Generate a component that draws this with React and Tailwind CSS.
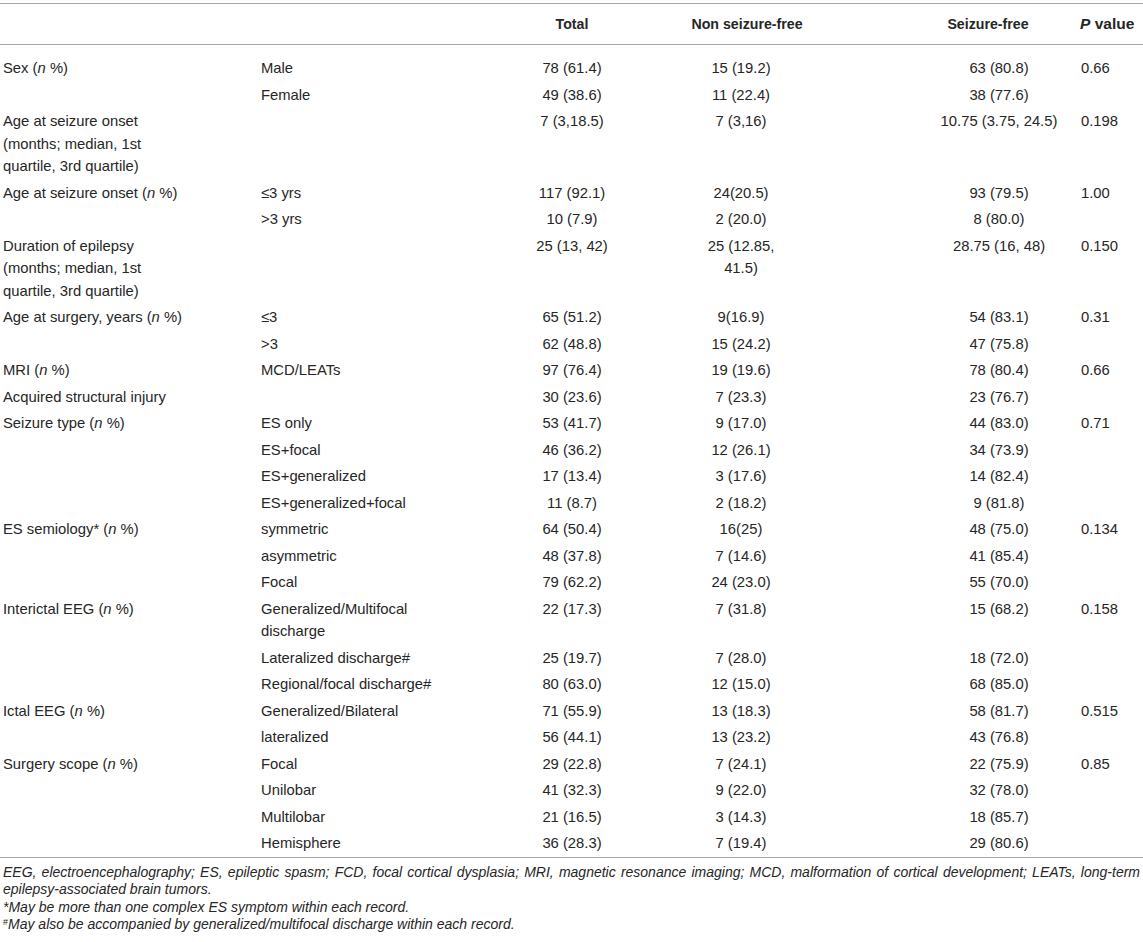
import React from "react";

const N = () => <i>n</i>;

const rows = [
  { a: <>Sex (<N /> %)</>, b: "Male", t: "78 (61.4)", n: "15 (19.2)", s: "63 (80.8)", p: "0.66" },
  { a: "", b: "Female", t: "49 (38.6)", n: "11 (22.4)", s: "38 (77.6)", p: "" },
  { a: <>Age at seizure onset<br />(months; median, 1st<br />quartile, 3rd quartile)</>, b: "", t: "7 (3,18.5)", n: "7 (3,16)", s: "10.75 (3.75, 24.5)", p: "0.198" },
  { a: <>Age at seizure onset (<N /> %)</>, b: "≤3 yrs", t: "117 (92.1)", n: "24(20.5)", s: "93 (79.5)", p: "1.00" },
  { a: "", b: ">3 yrs", t: "10 (7.9)", n: "2 (20.0)", s: "8 (80.0)", p: "" },
  { a: <>Duration of epilepsy<br />(months; median, 1st<br />quartile, 3rd quartile)</>, b: "", t: "25 (13, 42)", n: <>25 (12.85,<br />41.5)</>, s: "28.75 (16, 48)", p: "0.150" },
  { a: <>Age at surgery, years (<N /> %)</>, b: "≤3", t: "65 (51.2)", n: "9(16.9)", s: "54 (83.1)", p: "0.31" },
  { a: "", b: ">3", t: "62 (48.8)", n: "15 (24.2)", s: "47 (75.8)", p: "" },
  { a: <>MRI (<N /> %)</>, b: "MCD/LEATs", t: "97 (76.4)", n: "19 (19.6)", s: "78 (80.4)", p: "0.66" },
  { a: "Acquired structural injury", b: "", t: "30 (23.6)", n: "7 (23.3)", s: "23 (76.7)", p: "" },
  { a: <>Seizure type (<N /> %)</>, b: "ES only", t: "53 (41.7)", n: "9 (17.0)", s: "44 (83.0)", p: "0.71" },
  { a: "", b: "ES+focal", t: "46 (36.2)", n: "12 (26.1)", s: "34 (73.9)", p: "" },
  { a: "", b: "ES+generalized", t: "17 (13.4)", n: "3 (17.6)", s: "14 (82.4)", p: "" },
  { a: "", b: "ES+generalized+focal", t: "11 (8.7)", n: "2 (18.2)", s: "9 (81.8)", p: "" },
  { a: <>ES semiology* (<N /> %)</>, b: "symmetric", t: "64 (50.4)", n: "16(25)", s: "48 (75.0)", p: "0.134" },
  { a: "", b: "asymmetric", t: "48 (37.8)", n: "7 (14.6)", s: "41 (85.4)", p: "" },
  { a: "", b: "Focal", t: "79 (62.2)", n: "24 (23.0)", s: "55 (70.0)", p: "" },
  { a: <>Interictal EEG (<N /> %)</>, b: <>Generalized/Multifocal<br />discharge</>, t: "22 (17.3)", n: "7 (31.8)", s: "15 (68.2)", p: "0.158" },
  { a: "", b: "Lateralized discharge#", t: "25 (19.7)", n: "7 (28.0)", s: "18 (72.0)", p: "" },
  { a: "", b: "Regional/focal discharge#", t: "80 (63.0)", n: "12 (15.0)", s: "68 (85.0)", p: "" },
  { a: <>Ictal EEG (<N /> %)</>, b: "Generalized/Bilateral", t: "71 (55.9)", n: "13 (18.3)", s: "58 (81.7)", p: "0.515" },
  { a: "", b: "lateralized", t: "56 (44.1)", n: "13 (23.2)", s: "43 (76.8)", p: "" },
  { a: <>Surgery scope (<N /> %)</>, b: "Focal", t: "29 (22.8)", n: "7 (24.1)", s: "22 (75.9)", p: "0.85" },
  { a: "", b: "Unilobar", t: "41 (32.3)", n: "9 (22.0)", s: "32 (78.0)", p: "" },
  { a: "", b: "Multilobar", t: "21 (16.5)", n: "3 (14.3)", s: "18 (85.7)", p: "" },
  { a: "", b: "Hemisphere", t: "36 (28.3)", n: "7 (19.4)", s: "29 (80.6)", p: "" },
];

export default function App() {
  return (
    <div
      className="w-[1143px] h-[942px] bg-white text-[#262626] pt-[3px] overflow-hidden"
      style={{ fontFamily: '"Liberation Sans", Arial, sans-serif' }}
    >
      <table className="w-[1143px] table-fixed border-collapse text-[14.8px] leading-[22.5px]">
        <colgroup>
          <col className="w-[258px]" />
          <col className="w-[230px]" />
          <col className="w-[168px]" />
          <col className="w-[170px]" />
          <col className="w-[252px]" />
          <col className="w-[65px]" />
        </colgroup>
        <thead>
          <tr className="border-t border-b border-[#a8a8a8] h-[41px] font-bold text-[14.2px]">
            <th className="pl-[3px] text-left"></th>
            <th className="pl-[3px] text-left"></th>
            <th className="text-center">Total</th>
            <th className="text-center pl-[12px]">Non seizure-free</th>
            <th className="text-center pl-[72px]">Seizure-free</th>
            <th className="text-left pl-[2px] whitespace-nowrap text-[15.5px]"><i>P</i> value</th>
          </tr>
        </thead>
        <tbody className="align-top">
          {rows.map((r, i) => {
            const pad = i === 0 ? "pt-[12px] pb-[2px]" : "py-[2px]";
            return (
              <tr key={i} className={i === rows.length - 1 ? "border-b border-[#a8a8a8]" : ""}>
                <td className={`pl-[3px] text-left ${pad}`}>{r.a}</td>
                <td className={`pl-[3px] text-left ${pad}`}>{r.b}</td>
                <td className={`text-center ${pad}`}>{r.t}</td>
                <td className={`text-center ${pad}`}>{r.n}</td>
                <td className={`text-center pl-[94px] ${pad}`}>{r.s}</td>
                <td className={`text-left pl-[3px] ${pad}`}>{r.p}</td>
              </tr>
            );
          })}
        </tbody>
      </table>
      <div className="pl-[3px] pr-[3px] pt-[6px] text-[14px] leading-[17.5px] italic text-justify">
        <p>
          EEG, electroencephalography; ES, epileptic spasm; FCD, focal cortical dysplasia; MRI, magnetic resonance imaging; MCD, malformation of cortical development; LEATs, long-term epilepsy-associated brain tumors.
        </p>
        <p>*May be more than one complex ES symptom within each record.</p>
        <p>
          <sup className="text-[9px] not-italic">#</sup>May also be accompanied by generalized/multifocal discharge within each record.
        </p>
      </div>
    </div>
  );
}
